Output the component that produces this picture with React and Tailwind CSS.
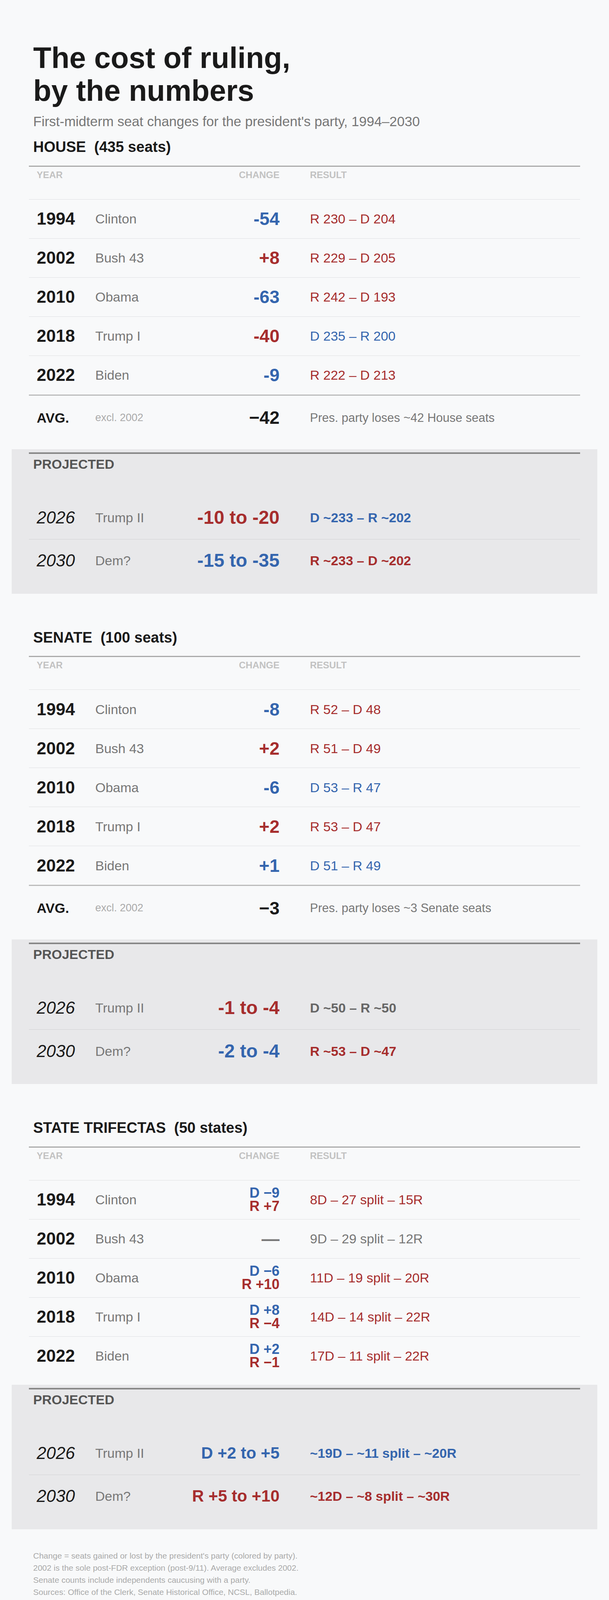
import React from 'react';

const BLUE = 'text-[#3465ae]';
const RED = 'text-[#a62d2d]';
const GRAY = 'text-[#777777]';
const DGRAY = 'text-[#666666]';

function HeaderRow() {
  return (
    <div className="flex h-[83px] items-start pl-[20px] pt-[9px] text-[24px] font-bold leading-none text-[#c2c2c2]">
      <div className="w-[150px]">YEAR</div>
      <div className="w-[200px]"></div>
      <div className="w-[272px] text-right">CHANGE</div>
      <div className="ml-[78px]">RESULT</div>
    </div>
  );
}

function DataRow({ year, name, change, result, resultColor }) {
  return (
    <div className="flex h-[100px] items-center border-t border-[#dfe0e2] pl-[20px]">
      <div className="w-[150px] text-[44px] font-bold leading-none text-[#1a1a1a]">{year}</div>
      <div className="w-[200px] text-[34px] leading-none text-[#777777]">{name}</div>
      <div className="flex w-[272px] justify-end">{change}</div>
      <div className={`ml-[78px] text-[34px] leading-none ${resultColor}`}>{result}</div>
    </div>
  );
}

function Num({ children, color }) {
  return <div className={`text-right text-[46px] font-bold leading-none ${color}`}>{children}</div>;
}

function Stack({ d, r }) {
  return (
    <div className="flex flex-col items-end text-[36px] font-bold leading-[34.4px]">
      <span className={BLUE}>{d}</span>
      <span className={RED}>{r}</span>
    </div>
  );
}

function AvgRow({ value, note }) {
  return (
    <div className="flex h-[116px] items-center border-t-[3px] border-[#bbbbbb] pl-[20px]">
      <div className="w-[150px] text-[35px] font-bold leading-none text-[#1a1a1a]">AVG.</div>
      <div className="w-[200px] text-[27px] leading-none text-[#aaaaaa]">excl. 2002</div>
      <div className="w-[272px] text-right text-[46px] font-bold leading-none text-[#1a1a1a]">{value}</div>
      <div className="ml-[78px] text-[31px] leading-none text-[#777777]">{note}</div>
    </div>
  );
}

function ProjRow({ year, name, change, changeColor, result, resultColor, small, border }) {
  return (
    <div className={border ? 'flex h-[110px] items-center border-t border-[#d2d2d4] pl-[20px]' : 'flex h-[110px] items-center pl-[20px]'}>
      <div className="w-[150px] text-[44px] italic leading-none text-[#1a1a1a]">{year}</div>
      <div className="w-[200px] text-[34px] leading-none text-[#777777]">{name}</div>
      <div
        className={`w-[272px] whitespace-nowrap text-right font-bold leading-none ${small ? 'text-[42px]' : 'text-[48px]'} ${changeColor}`}
      >
        {change}
      </div>
      <div className={`ml-[78px] whitespace-nowrap text-[34px] font-bold leading-none ${resultColor}`}>{result}</div>
    </div>
  );
}

function Projected({ rows, small }) {
  return (
    <div className="mx-[-44px] mt-[24px] bg-[#e8e8ea] px-[44px] pb-[30px] pt-[8px]">
      <div className="border-t-4 border-[#888888]">
        <div className="pl-[11px] pt-[9px] text-[34px] font-bold leading-none text-[#555555]">PROJECTED</div>
        <div className="mt-[65px]">
          {rows.map((r, i) => (
            <ProjRow key={r.year} {...r} small={small} border={i > 0} />
          ))}
        </div>
      </div>
    </div>
  );
}

function Section({ title, first, rows, avg, projected, small }) {
  return (
    <section className={first ? 'mt-[20px]' : 'mt-[90px]'}>
      <h2 className="whitespace-pre pl-[11px] text-[38px] font-bold leading-[1.2] text-[#1a1a1a]">{title}</h2>
      <div className="mt-[24px] border-t-[3px] border-[#aaaaaa]">
        <HeaderRow />
        {rows.map((r) => (
          <DataRow key={r.year} {...r} />
        ))}
        {avg && <AvgRow {...avg} />}
      </div>
      <Projected rows={projected} small={small} />
    </section>
  );
}

const house = [
  { year: '1994', name: 'Clinton', change: <Num color={BLUE}>-54</Num>, result: 'R 230 – D 204', resultColor: RED },
  { year: '2002', name: 'Bush 43', change: <Num color={RED}>+8</Num>, result: 'R 229 – D 205', resultColor: RED },
  { year: '2010', name: 'Obama', change: <Num color={BLUE}>-63</Num>, result: 'R 242 – D 193', resultColor: RED },
  { year: '2018', name: 'Trump I', change: <Num color={RED}>-40</Num>, result: 'D 235 – R 200', resultColor: BLUE },
  { year: '2022', name: 'Biden', change: <Num color={BLUE}>-9</Num>, result: 'R 222 – D 213', resultColor: RED },
];

const houseProj = [
  { year: '2026', name: 'Trump II', change: '-10 to -20', changeColor: RED, result: 'D ~233 – R ~202', resultColor: BLUE },
  { year: '2030', name: 'Dem?', change: '-15 to -35', changeColor: BLUE, result: 'R ~233 – D ~202', resultColor: RED },
];

const senate = [
  { year: '1994', name: 'Clinton', change: <Num color={BLUE}>-8</Num>, result: 'R 52 – D 48', resultColor: RED },
  { year: '2002', name: 'Bush 43', change: <Num color={RED}>+2</Num>, result: 'R 51 – D 49', resultColor: RED },
  { year: '2010', name: 'Obama', change: <Num color={BLUE}>-6</Num>, result: 'D 53 – R 47', resultColor: BLUE },
  { year: '2018', name: 'Trump I', change: <Num color={RED}>+2</Num>, result: 'R 53 – D 47', resultColor: RED },
  { year: '2022', name: 'Biden', change: <Num color={BLUE}>+1</Num>, result: 'D 51 – R 49', resultColor: BLUE },
];

const senateProj = [
  { year: '2026', name: 'Trump II', change: '-1 to -4', changeColor: RED, result: 'D ~50 – R ~50', resultColor: DGRAY },
  { year: '2030', name: 'Dem?', change: '-2 to -4', changeColor: BLUE, result: 'R ~53 – D ~47', resultColor: RED },
];

const tri = [
  { year: '1994', name: 'Clinton', change: <Stack d="D −9" r="R +7" />, result: '8D – 27 split – 15R', resultColor: RED },
  {
    year: '2002',
    name: 'Bush 43',
    change: <Num color={GRAY}>—</Num>,
    result: '9D – 29 split – 12R',
    resultColor: GRAY,
  },
  { year: '2010', name: 'Obama', change: <Stack d="D −6" r="R +10" />, result: '11D – 19 split – 20R', resultColor: RED },
  { year: '2018', name: 'Trump I', change: <Stack d="D +8" r="R −4" />, result: '14D – 14 split – 22R', resultColor: RED },
  { year: '2022', name: 'Biden', change: <Stack d="D +2" r="R −1" />, result: '17D – 11 split – 22R', resultColor: RED },
];

const triProj = [
  { year: '2026', name: 'Trump II', change: 'D +2 to +5', changeColor: BLUE, result: '~19D – ~11 split – ~20R', resultColor: BLUE },
  { year: '2030', name: 'Dem?', change: 'R +5 to +10', changeColor: RED, result: '~12D – ~8 split – ~30R', resultColor: RED },
];

export default function App() {
  return (
    <div className="w-full bg-[#f8f9fa] font-['Liberation_Sans',Arial,Helvetica,sans-serif]">
      <div className="px-[74px] pb-[18px] pt-[106px]">
        <h1 className="pl-[11px] text-[76px] font-bold leading-[1.1] text-[#1a1a1a]">
          The cost of ruling,
          <br />
          by the numbers
        </h1>
        <p className="mt-[16px] pl-[11px] text-[35px] leading-[44.8px] text-[#777777]">
          First-midterm seat changes for the president's party, 1994–2030
        </p>

        <Section
          first
          title={'HOUSE  (435 seats)'}
          rows={house}
          avg={{ value: '−42', note: 'Pres. party loses ~42 House seats' }}
          projected={houseProj}
        />
        <Section
          title={'SENATE  (100 seats)'}
          rows={senate}
          avg={{ value: '−3', note: 'Pres. party loses ~3 Senate seats' }}
          projected={senateProj}
        />
        <Section title={'STATE TRIFECTAS  (50 states)'} rows={tri} projected={triProj} small />

        <footer className="mt-[52px] pl-[11px] text-[21px] leading-[31px] text-[#a9a9a9]">
          <p>Change = seats gained or lost by the president's party (colored by party).</p>
          <p>2002 is the sole post-FDR exception (post-9/11). Average excludes 2002.</p>
          <p>Senate counts include independents caucusing with a party.</p>
          <p>Sources: Office of the Clerk, Senate Historical Office, NCSL, Ballotpedia.</p>
          <p>Projections: Sabato's Crystal Ball, current forecasts, historical patterns.</p>
        </footer>
      </div>
    </div>
  );
}
